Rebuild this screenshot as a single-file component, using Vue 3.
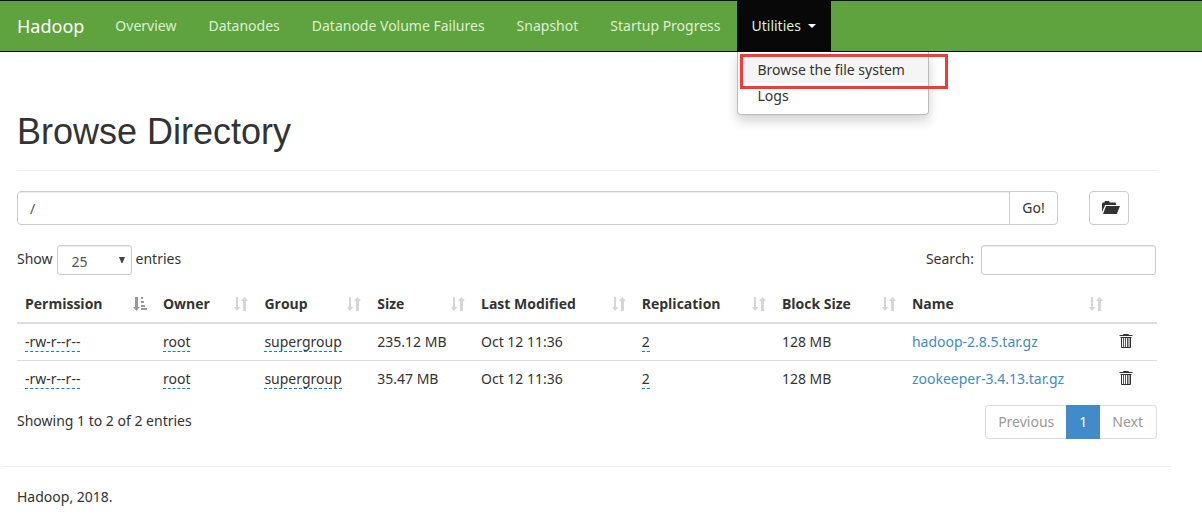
<script setup>
import { ref } from 'vue'

const links = ['Overview', 'Datanodes', 'Datanode Volume Failures', 'Snapshot', 'Startup Progress']
const columns = ['Permission', 'Owner', 'Group', 'Size', 'Last Modified', 'Replication', 'Block Size', 'Name']
const files = [
  { permission: '-rw-r--r--', owner: 'root', group: 'supergroup', size: '235.12 MB', modified: 'Oct 12 11:36', replication: 2, block: '128 MB', name: 'hadoop-2.8.5.tar.gz' },
  { permission: '-rw-r--r--', owner: 'root', group: 'supergroup', size: '35.47 MB', modified: 'Oct 12 11:36', replication: 2, block: '128 MB', name: 'zookeeper-3.4.13.tar.gz' },
]
const directory = ref('/')
const pageSize = ref('25')
const search = ref('')
</script>

<template>
  <div class="page">
    <header class="navbar">
      <a class="brand" href="#">Hadoop</a>
      <nav class="nav">
        <a v-for="link in links" :key="link" class="nav-link" href="#">{{ link }}</a>
        <div class="dropdown">
          <button class="toggle" type="button" aria-expanded="true">
            Utilities <span class="caret"></span>
          </button>
          <div class="menu">
            <a class="menu-item hovered" href="#">Browse the file system</a>
            <a class="menu-item" href="#">Logs</a>
            <span class="marker"></span>
          </div>
        </div>
      </nav>
    </header>

    <div class="container">
      <main class="content">
        <h1 class="title">Browse Directory</h1>

        <form class="path-row" @submit.prevent>
          <div class="path-group">
            <input v-model="directory" class="path-input" type="text" aria-label="Directory" />
            <button class="go" type="submit">Go!</button>
          </div>
          <div class="path-side">
            <button class="folder" type="button" aria-label="Create directory">
              <svg width="18" height="14" viewBox="0 0 18 14" fill="#333" aria-hidden="true">
                <path d="M0 11V2.4L1 1.4h1.3L3 0h4l.8 1.4h5.4l.9 1V4H3.2L0 11z" />
                <path d="M4 5h14l-3.2 8H1z" />
              </svg>
            </button>
          </div>
        </form>

        <div class="controls">
          <div class="length">
            <label for="page-size">Show</label>
            <span class="select-box">
              <select id="page-size" v-model="pageSize" class="select">
                <option>25</option>
                <option>50</option>
                <option>100</option>
              </select>
              <svg class="select-arrow" width="6" height="6" viewBox="0 0 6 6" fill="#444" aria-hidden="true"><path d="M0 0h6L3.5 6h-1z" /></svg>
            </span>
            <span>entries</span>
          </div>
          <div class="filter">
            <label for="search">Search:</label>
            <input id="search" v-model="search" class="search" type="search" />
          </div>
        </div>

        <table class="table">
          <colgroup>
            <col class="c-permission" />
            <col class="c-owner" />
            <col class="c-group" />
            <col class="c-size" />
            <col class="c-modified" />
            <col class="c-replication" />
            <col class="c-block" />
            <col class="c-name" />
            <col class="c-action" />
          </colgroup>
          <thead>
            <tr>
              <th v-for="(column, i) in columns" :key="column" scope="col">
                <button class="sort" type="button">
                  <span>{{ column }}</span>
                  <svg v-if="i === 0" width="14" height="14" viewBox="0 0 14 14" fill="#999" aria-hidden="true">
                    <path d="M2 0h3v10h2l-3.5 4L0 10h2z" />
                    <path d="M8 0h2v2H8zM8 4h3v2H8zM8 8h4v2H8zM8 11h6v2H8z" />
                  </svg>
                  <svg v-else width="14" height="14" viewBox="0 0 14 14" fill="#d6d6d6" aria-hidden="true">
                    <path d="M2 0h2v10h2.5L3 14 0 10h2z" />
                    <path d="M9 14h3V4h2l-3.5-4L7 4h2z" />
                  </svg>
                </button>
              </th>
              <th></th>
            </tr>
          </thead>
          <tbody>
            <tr v-for="file in files" :key="file.name">
              <td><a class="editable" href="#">{{ file.permission }}</a></td>
              <td><a class="editable" href="#">{{ file.owner }}</a></td>
              <td><a class="editable" href="#">{{ file.group }}</a></td>
              <td>{{ file.size }}</td>
              <td>{{ file.modified }}</td>
              <td><a class="editable" href="#">{{ file.replication }}</a></td>
              <td>{{ file.block }}</td>
              <td><a class="file" href="#">{{ file.name }}</a></td>
              <td>
                <button class="trash" type="button" :aria-label="'Delete ' + file.name">
                  <svg width="14" height="16" viewBox="0 0 14 16" fill="none" stroke="#333" aria-hidden="true">
                    <path d="M4.5 2.5v-1h5v1M.5 2.5h13M1.5 4.5h11M2.5 4.5v10h9v-10" />
                    <path d="M4.5 5v9M6.5 5v9M8.5 5v9M10 5v9" stroke="#555" />
                  </svg>
                </button>
              </td>
            </tr>
          </tbody>
        </table>

        <div class="summary">
          <span class="info">Showing 1 to 2 of 2 entries</span>
          <div class="pagination">
            <a class="page-link first" href="#">Previous</a>
            <a class="page-link active" href="#">1</a>
            <a class="page-link last" href="#">Next</a>
          </div>
        </div>
      </main>

      <footer class="footer">Hadoop, 2018.</footer>
    </div>
  </div>
</template>

<style>
body {
  margin: 0;
  background: #fff;
}
</style>

<style scoped>
.page,
.page * {
  box-sizing: border-box;
}
.page {
  font-family: "Noto Sans", "Open Sans", sans-serif;
  font-size: 14px;
  line-height: 20px;
  color: #333;
}
button,
input,
select {
  font: inherit;
  margin: 0;
}
button {
  cursor: pointer;
}
a {
  text-decoration: none;
}
.navbar {
  display: flex;
  height: 52px;
  border-top: 1px solid #080808;
  border-bottom: 1px solid #080808;
  background: #5fa33e;
}
.brand {
  padding: 15px 15px 15px 17px;
  font-size: 18px;
  color: #fff;
}
.nav {
  display: flex;
}
.nav-link {
  padding: 15px 16px;
  color: #dcf0d3;
  white-space: nowrap;
}
.dropdown {
  position: relative;
}
.toggle {
  display: flex;
  align-items: center;
  gap: 7px;
  height: 50px;
  padding: 15px;
  border: 0;
  background: #080808;
  color: #dcf0d3;
}
.caret {
  border-top: 4px solid #fff;
  border-left: 4px solid transparent;
  border-right: 4px solid transparent;
}
.menu {
  position: absolute;
  top: 51px;
  left: 0;
  z-index: 2;
  min-width: 192px;
  padding: 5px 0;
  border: 1px solid #bbb;
  border-top: 0;
  border-radius: 0 0 4px 4px;
  background: #fff;
  box-shadow: 0 6px 12px rgba(0, 0, 0, 0.175);
}
.menu-item {
  display: block;
  padding: 3px 20px;
  color: #333;
  white-space: nowrap;
}
.hovered {
  background: #f5f5f5;
}
.marker {
  position: absolute;
  top: 2px;
  left: 2px;
  right: -20px;
  height: 35px;
  border: 3px solid #fb3838;
  pointer-events: none;
}
.container {
  margin: 0 30px 0 2px;
}
.content {
  padding: 60px 15px 27px;
}
.title {
  margin: 0 0 20px;
  padding-bottom: 19px;
  border-bottom: 1px solid #eee;
  font-family: "Liberation Sans", Arial, sans-serif;
  font-size: 36px;
  font-weight: 400;
  line-height: 39px;
}
.path-row {
  display: flex;
  gap: 31px;
}
.path-group {
  display: flex;
  flex: 1;
}
.path-input {
  flex: 1;
  min-width: 0;
  height: 34px;
  padding: 6px 12px;
  border: 1px solid #ccc;
  border-radius: 4px 0 0 4px;
  color: #555;
  box-shadow: inset 0 1px 1px rgba(0, 0, 0, 0.075);
}
.go {
  width: 49px;
  margin-left: -1px;
  padding: 0;
  border: 1px solid #ccc;
  border-radius: 0 4px 4px 0;
  background: #fff;
  color: #333;
}
.path-side {
  width: 68px;
}
.folder {
  display: grid;
  place-items: center;
  width: 40px;
  height: 34px;
  padding: 0 0 0 4px;
  border: 1px solid #ccc;
  border-radius: 4px;
  background: #fff;
}
.controls {
  display: flex;
  justify-content: space-between;
  padding: 20px 1px 11px 0;
}
.length {
  display: flex;
  gap: 4px;
}
.length,
.filter {
  line-height: 28px;
}
.filter {
  display: flex;
  gap: 7px;
}
.select-box {
  position: relative;
  display: flex;
}
.select {
  appearance: none;
  width: 75px;
  height: 30px;
  padding: 2px 14px 0;
  border: 1px solid #ccc;
  border-radius: 3px;
  background: #fff;
  color: #555;
  box-shadow: inset 0 1px 1px rgba(0, 0, 0, 0.075);
}
.select-arrow {
  position: absolute;
  top: 12px;
  right: 7px;
  pointer-events: none;
}
.search {
  width: 175px;
  height: 30px;
  padding: 5px 10px;
  border: 1px solid #ccc;
  border-radius: 3px;
  box-shadow: inset 0 1px 1px rgba(0, 0, 0, 0.075);
}
.table {
  width: 100%;
  table-layout: fixed;
  border-collapse: separate;
  border-spacing: 0;
}
.c-permission { width: 12.1%; }
.c-owner { width: 8.9%; }
.c-group { width: 9.9%; }
.c-size { width: 9.1%; }
.c-modified { width: 14.1%; }
.c-replication { width: 12.3%; }
.c-block { width: 11.4%; }
.c-name { width: 18.2%; }
.c-action { width: 4%; }
th,
td {
  height: 36px;
  padding: 8px;
  text-align: left;
  vertical-align: top;
  white-space: nowrap;
}
th {
  border-bottom: 2px solid #ddd;
}
tbody tr + tr td {
  border-top: 1px solid #ddd;
}
.sort {
  display: flex;
  align-items: center;
  justify-content: space-between;
  width: 100%;
  padding: 0;
  border: 0;
  background: none;
  color: #333;
  font-family: "Open Sans", "Noto Sans", sans-serif;
  font-weight: 700;
}
.editable {
  border-bottom: 1px dashed #08c;
  color: #333;
}
.file {
  color: #428bca;
}
.trash {
  display: grid;
  align-items: center;
  height: 18px;
  padding: 0;
  border: 0;
  background: none;
}
.summary {
  display: flex;
  align-items: flex-start;
  justify-content: space-between;
  padding-top: 8px;
}
.info {
  padding-top: 6px;
}
.pagination {
  display: flex;
}
.page-link {
  padding: 6px 12px;
  border: 1px solid #ddd;
  color: #999;
}
.first {
  border-right: 0;
  border-radius: 4px 0 0 4px;
}
.last {
  padding-right: 13px;
  border-left: 0;
  border-radius: 0 4px 4px 0;
}
.active {
  border-color: #428bca;
  background: #428bca;
  color: #fff;
}
.footer {
  padding: 20px 15px 9px;
  border-top: 1px solid #eee;
}
</style>
